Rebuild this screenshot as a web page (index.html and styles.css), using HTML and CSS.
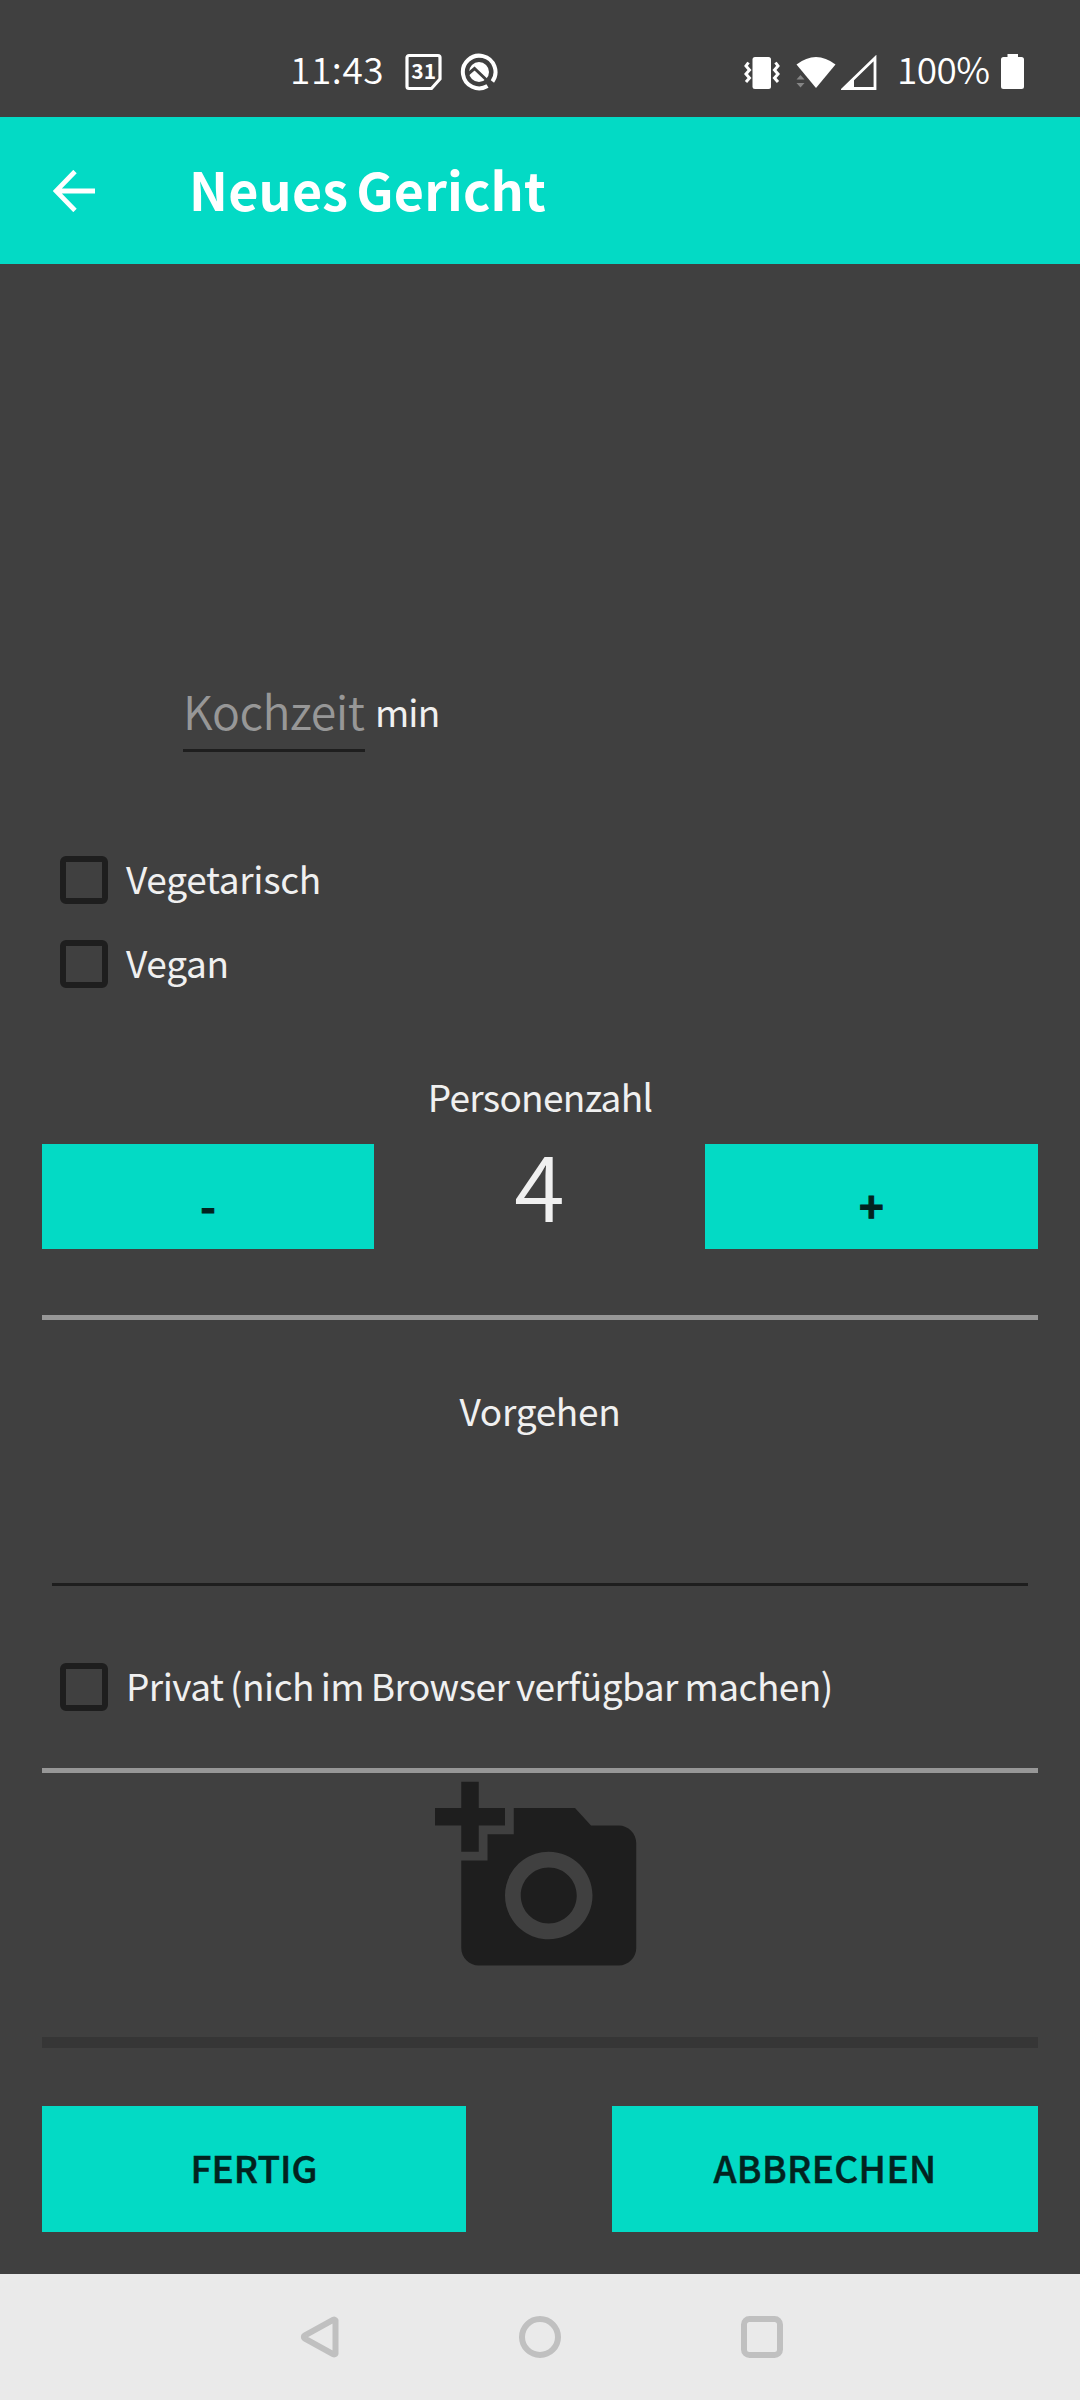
FILE: index.html
```html
<!DOCTYPE html>
<html lang="de">
<head>
<meta charset="utf-8">
<title>Neues Gericht</title>
<link rel="stylesheet" href="styles.css">
</head>
<body>
<div class="screen">
  <header class="status">
    <span class="clock">11:43</span>
    <svg class="ic-calendar" width="38" height="38" viewBox="0 0 38 38"><path d="M4 2.500H33a2 2 0 0 1 2 2V26L26.500 35.500H4a2 2 0 0 1-2-2V4.500a2 2 0 0 1 2-2Z" fill="none" stroke="#fff" stroke-width="3.200"/><text x="18.700" y="25.500" text-anchor="middle" class="day">31</text></svg>
    <svg class="ic-news" width="38" height="38" viewBox="0 0 38 38"><path d="M27.500 33A16.300 16.300 0 1 1 32.400 28.500" fill="none" stroke="#fff" stroke-width="4"/><circle cx="19" cy="19" r="10" fill="#fff"/><path d="M7.500 21.500L14.500 15.500L24 24.500L33 33" fill="none" stroke="#404040" stroke-width="3"/></svg>
    <svg class="ic-vibrate" width="36" height="34" viewBox="0 0 36 34"><rect x="8.500" y="1" width="18.500" height="32" rx="2.500" fill="#fff"/><path d="M4.500 6.500L2 10l3.500 4L2 18l3.500 4L2 26M31.500 6.500L34 10l-3.500 4L34 18l-3.500 4L34 26" fill="none" stroke="#fff" stroke-width="3"/></svg>
    <svg class="ic-wifi" width="40" height="34" viewBox="0 0 40 34"><path d="M.5 8.500Q20-6.500 39.500 8.500L20 32Z" fill="#fff"/><path d="M.500 23.500l4-4.500 4 4.500ZM.500 27l4 4.500 4-4.500Z" fill="#858585"/></svg>
    <svg class="ic-signal" width="36" height="36" viewBox="0 0 36 36"><path d="M2.500 33.500H34V3Z" fill="none" stroke="#fff" stroke-width="2.800"/><path d="M2 34L13 22V34Z" fill="#fff"/></svg>
    <span class="level">100%</span>
    <svg class="ic-battery" width="23" height="35" viewBox="0 0 23 35"><path d="M6.500 0H17V3H20.500A2.500 2.500 0 0 1 23 5.500V32.500A2.500 2.500 0 0 1 20.500 35H2.500A2.500 2.500 0 0 1 0 32.500V5.500A2.500 2.500 0 0 1 2.500 3H6.500Z" fill="#fff"/></svg>
  </header>

  <div class="appbar">
    <svg class="back" width="42" height="42" viewBox="0 0 42 42"><path d="M22 1.500L3 21L22 40.500M3 21H42" fill="none" stroke="#fff" stroke-width="4.800"/></svg>
    <h1 class="title">Neues Gericht</h1>
  </div>

  <main class="form">
    <div class="time-row">
      <div class="time-input"><span class="hint">Kochzeit</span></div>
      <span class="unit">min</span>
    </div>
    <label class="check"><i class="box"></i><span>Vegetarisch</span></label>
    <label class="check"><i class="box"></i><span>Vegan</span></label>

    <div class="caption persons">Personenzahl</div>
    <div class="stepper">
      <button class="btn step">-</button>
      <span class="count">4</span>
      <button class="btn step">+</button>
    </div>
    <hr class="rule">

    <div class="caption steps">Vorgehen</div>
    <div class="steps-input"></div>
    <label class="check private"><i class="box"></i><span>Privat (nich im Browser verfügbar machen)</span></label>
    <hr class="rule photo-rule">

    <svg class="camera" width="210" height="210" viewBox="0 0 24 24"><path d="M3 4V1h2v3h3v2H5v3H3V6H0V4h3zm3 6V7h3V4h7l1.830 2H21c1.100 0 2 .9 2 2v12c0 1.100-.9 2-2 2H5c-1.100 0-2-.9-2-2V10h3zm7 9c2.760 0 5-2.240 5-5s-2.240-5-5-5-5 2.240-5 5 2.240 5 5 5zm-3.200-5c0 1.770 1.430 3.200 3.200 3.200s3.200-1.430 3.200-3.200-1.430-3.200-3.200-3.200-3.200 1.430-3.200 3.200z"/></svg>
    <div class="progress"></div>
    <div class="actions">
      <button class="btn done">FERTIG</button>
      <button class="btn cancel">ABBRECHEN</button>
    </div>
  </main>

  <nav class="nav">
    <svg width="42" height="42" viewBox="0 0 42 42"><path d="M35.500 4.500V37.500A1.500 1.500 0 0 1 33.500 38.300L4.500 22.300A1.600 1.600 0 0 1 4.500 19.700L33.500 3.700A1.500 1.500 0 0 1 35.500 4.500Z"/></svg>
    <svg width="42" height="42" viewBox="0 0 42 42"><circle cx="21" cy="21" r="18"/></svg>
    <svg width="42" height="42" viewBox="0 0 42 42"><rect x="3" y="3" width="36" height="36" rx="5.500"/></svg>
  </nav>
</div>
</body>
</html>
```
FILE: styles.css
```css
* { box-sizing: border-box; }
body { margin: 0; background: #404040; font-family: "Noto Sans CJK SC", "Noto Sans", sans-serif; color: #f0f0f0; }
.screen { width: 1080px; height: 2400px; display: flex; flex-direction: column; background: #404040; }
svg { display: block; flex: none; }

.status { height: 117px; display: flex; align-items: flex-start; color: #fff; font-size: 37px; line-height: 54px; font-weight: 350; white-space: nowrap; }
.clock { width: 115px; margin: 41px 0 0 290px; letter-spacing: .6px; }
.ic-calendar { margin-top: 53px; }
.ic-news { margin: 53px 0 0 17px; }
.day { font: 700 21px "Noto Sans CJK SC", sans-serif; fill: #fff; }
.ic-vibrate { margin: 56px 0 0 246px; }
.ic-wifi { margin: 56px 0 0 16px; }
.ic-signal { margin: 55px 0 0 5px; }
.level { width: 104px; margin: 41px 0 0 20px; letter-spacing: -.6px; }
.ic-battery { margin-top: 54px; }

.appbar { height: 147px; display: flex; align-items: flex-start; background: #03dac5; }
.back { margin: 53px 0 0 53px; }
.title { margin: 34px 0 0 94px; font-size: 52px; line-height: 76px; font-weight: 700; letter-spacing: .2px; word-spacing: -4px; color: #fff; white-space: nowrap; }

.form { flex: 1; display: flex; flex-direction: column; padding: 0 42px; font-size: 37px; line-height: 54px; letter-spacing: -.3px; }
.time-row { display: flex; align-items: flex-start; margin: 412px 0 0 141px; height: 162px; }
.time-input { width: 182px; height: 76px; border-bottom: 3px solid #1e1e1e; }
.hint { display: block; font-size: 46.500px; line-height: 68px; font-weight: 350; letter-spacing: -.5px; color: #979797; white-space: nowrap; }
.unit { margin: 8px 0 0 10px; letter-spacing: -.9px; }
.check { display: flex; align-items: center; height: 84px; padding-left: 18px; white-space: nowrap; }
.check span { margin: -4px 0 0 18px; }
.box { width: 48px; height: 48px; border: 6px solid #1e1e1e; border-radius: 6px; }
.caption { text-align: center; height: 54px; }
.persons { margin-top: 63px; letter-spacing: -.7px; }
.stepper { display: grid; grid-template-columns: 332px 331px 333px; height: 105px; margin-top: 21px; }
.btn { border: 0; border-radius: 0; padding: 0; background: #03dac5; color: #02231f; font: 500 37px/54px "Noto Sans CJK SC", sans-serif; -webkit-text-stroke: .5px #02231f; }
.step { padding-top: 17px; font-size: 42px; font-weight: 700; -webkit-text-stroke-width: 1px; }
.count { align-self: start; font-size: 92px; line-height: 75px; text-align: center; font-weight: 350; letter-spacing: 0; }
.rule { flex: none; width: 100%; height: 5px; margin: 66px 0 0; border: 0; background: #979797; }
.steps { margin-top: 63px; }
.steps-input { height: 149px; margin: 0 10px; border-bottom: 3px solid #1e1e1e; }
.private { margin-top: 59px; letter-spacing: -.55px; word-spacing: -1px; }
.photo-rule { margin-top: 39px; }
.camera { align-self: flex-start; margin-left: 393px; fill: #1e1e1e; }
.progress { height: 11px; margin-top: 54px; background: #363636; }
.actions { display: flex; justify-content: space-between; height: 126px; margin-top: 58px; }
.actions .btn { padding-bottom: 4px; }
.done { width: 424px; }
.cancel { width: 426px; letter-spacing: .4px; }

.nav { height: 126px; display: flex; align-items: center; padding-left: 300px; gap: 177px; background: #eaeaea; }
.nav svg { fill: none; stroke: #c0c0c0; stroke-width: 6; stroke-linejoin: round; }
.nav svg + svg + svg { margin-left: 3px; }
```
